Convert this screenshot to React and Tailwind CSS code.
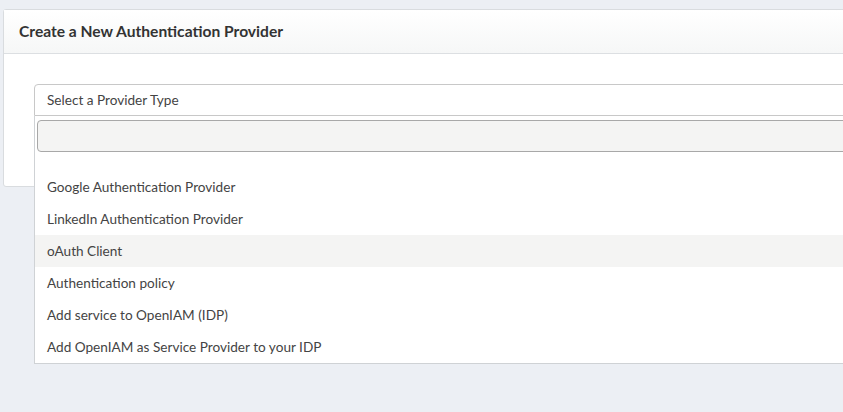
export default function App() {
  const options = [
    "Google Authentication Provider",
    "LinkedIn Authentication Provider",
    "oAuth Client",
    "Authentication policy",
    "Add service to OpenIAM (IDP)",
    "Add OpenIAM as Service Provider to your IDP",
  ];
  return (
    <div className="relative h-[412px] w-[843px] overflow-hidden bg-[#eceff4] font-['Lato',sans-serif]">
      {/* Panel */}
      <div className="absolute left-[3px] top-[9px] h-[178px] w-[860px] rounded-[3px] border border-[#d9dcdf] bg-white">
        <div className="flex h-[44px] items-center border-b border-[#dcdfe2] bg-gradient-to-b from-white to-[#f6f7f7] pl-[15px]">
          <h2 className="text-[15.6px] font-bold text-[#333]">Create a New Authentication Provider</h2>
        </div>
      </div>

      {/* Select with open dropdown, overlays the panel */}
      <div className="absolute left-[34px] top-[84px] w-[830px]">
        <div className="flex h-[32px] items-center rounded-t-[4px] border border-[#c8c8c8] bg-white pl-[12px] text-[13.6px] text-[#444]">
          Select a Provider Type
        </div>
        <div className="border-x border-b border-[#cfd2d5] bg-white">
          <div className="px-[2px] pt-[4px]">
            <div className="h-[32px] rounded-[4px] border border-[#a8a8a8] bg-[#f4f4f3]" />
          </div>
          <ul className="pt-[19px]">
            {options.map((o, i) => (
              <li
                key={o}
                className={`flex h-[32px] items-center pl-[12px] text-[13.6px] text-[#444] ${i === 2 ? "bg-[#f4f4f3]" : ""}`}
              >
                {o}
              </li>
            ))}
          </ul>
        </div>
      </div>
    </div>
  );
}
